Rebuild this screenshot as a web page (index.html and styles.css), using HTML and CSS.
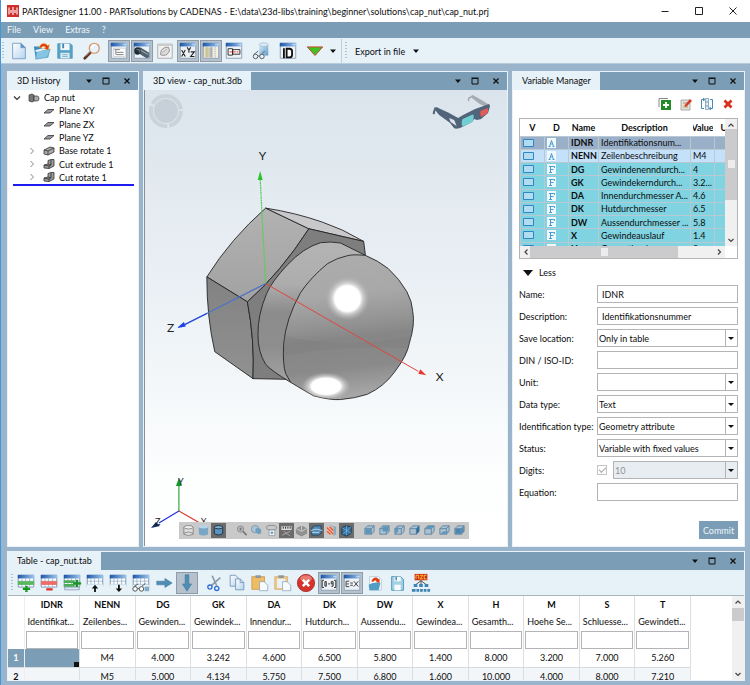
FILE: index.html
```html
<!DOCTYPE html>
<html lang="en">
<head>
<meta charset="utf-8">
<title>PARTdesigner 11.00</title>
<link rel="stylesheet" href="styles.css">
</head>
<body>
<svg class="defs" aria-hidden="true">
  <defs>
    <linearGradient id="g-blue" x1="0" y1="0" x2="1" y2="1"><stop offset="0" stop-color="#d6ebf8"/><stop offset="1" stop-color="#5f9cc9"/></linearGradient>
    <linearGradient id="g-cap" x1="0" y1="0" x2="1" y2="0"><stop offset="0" stop-color="#1d55a8"/><stop offset="1" stop-color="#9cc6ec"/></linearGradient>
    <linearGradient id="g-paper" x1="0" y1="0" x2="1" y2="1"><stop offset="0" stop-color="#fff"/><stop offset="1" stop-color="#b4d3ee"/></linearGradient>
  </defs>
  <symbol id="i-new" viewBox="0 0 22 22"><path d="M4 2.500h9l5 5v12H4z" fill="url(#g-paper)" stroke="#7a9cc4"/><path d="M13 2.500v5h5z" fill="#5b90c4" stroke="#5b90c4" stroke-width=".5"/></symbol>
  <symbol id="i-open" viewBox="0 0 22 22"><path d="M2 6h6l2 2h8v10H4z" fill="#3f8cb8"/><path d="M5 11l15-2-3 9-13 2z" fill="#86c6e4" stroke="#3f86b0" stroke-width=".6"/><path d="M4 11l13-3" stroke="#e8f5fb" stroke-width="2"/><path d="M8 7c1-4 6-6 9-2l2-1-1 6-5-2 2-1c-2-2-4-1-5 1z" fill="#dd3f14" stroke="#f7ad2a" stroke-width=".6"/></symbol>
  <symbol id="i-save" viewBox="0 0 22 22"><path d="M3 3h14l2 2v14H3z" fill="#58a4c8" stroke="#3f86aa" stroke-width=".7"/><path d="M6 3h10v7H6z" fill="#f2f8fb"/><path d="M8 3h2v5H8z" fill="#3c88ab"/><path d="M6 13h10v6H6z" fill="#ddecf3"/><path d="M8 15h6M8 17h6" stroke="#7fb0c8"/></symbol>
  <symbol id="i-find" viewBox="0 0 22 22"><path d="M3 19l7-7" stroke="#5c3424" stroke-width="3" stroke-linecap="round"/><path d="M4 17l5-5" stroke="#b57b5c"/><circle cx="13.500" cy="8" r="5.500" fill="#e9f3fb" stroke="#d98f5a" stroke-width="1.300"/><path d="M10.500 8a3 3 0 013-3" stroke="#fff" stroke-width="1.500" fill="none"/></symbol>
  <symbol id="i-win" viewBox="0 0 22 22"><path d="M2.500 2.500h17v16.500h-17z" fill="#edf2f6" stroke="#8b9daf"/><path d="M2 2h18v4H2z" fill="url(#g-cap)"/><path d="M16 4h1M18 4h1" stroke="#fff"/></symbol>
  <symbol id="i-tree" viewBox="0 0 22 22"><use href="#i-win"/><path d="M5 8h13v9H5z" fill="#fff" stroke="#bbb" stroke-width=".6"/><path d="M6 9.500h6M8 12.500h8M8 15h8M7.500 10v5" stroke="#777" fill="none"/></symbol>
  <symbol id="i-bolt" viewBox="0 0 22 22"><use href="#i-win"/><path d="M5 8l4-1 10 6v5l-3 1L8 14z" fill="#50616e"/><path d="M9 10l9 5" stroke="#a8b8c2"/><ellipse cx="6" cy="11" rx="3.500" ry="4" fill="#202b33"/><path d="M5 9.500h3v3" stroke="#7e8d97" fill="none"/></symbol>
  <symbol id="i-sketch" viewBox="0 0 22 22"><path d="M3 3.500h16v15.500H3z" fill="#f1f1f1" stroke="#aaa"/><path d="M3 3.500h16v2H3z" fill="#ccc"/><path d="M6 15l1-5 4-3h4l1 4-3 4-4 1z" fill="#ddd" stroke="#777" stroke-width=".8"/><path d="M8 13l5-4" stroke="#aaa"/></symbol>
  <symbol id="i-xyz" viewBox="0 0 22 22"><use href="#i-win"/><path d="M4 10l4 7M8 10l-4 7M10 7l2 3 2-3M12 10v3M14 12h4l-4 5h4" stroke="#222" stroke-width="1.200" fill="none"/></symbol>
  <symbol id="i-cols" viewBox="0 0 22 22"><use href="#i-win"/><path d="M4 7h5v11H4z" fill="#dccf9b"/><path d="M9 7h4v11H9z" fill="#b8bdc4"/><path d="M13 7h5v11h-5z" fill="#f3efd9"/><path d="M6.500 7v11M11.500 7v11M15.500 7v11" stroke="#929aa3" stroke-dasharray="1 1"/></symbol>
  <symbol id="i-part" viewBox="0 0 22 22"><use href="#i-win"/><path d="M4.500 8.500h5v7h-5zM9.500 9.500h8v5h-8z" fill="#fff" stroke="#222"/><path d="M6 12h10" stroke="#d22" stroke-dasharray="3 1"/></symbol>
  <symbol id="i-cylglass" viewBox="0 0 22 22"><path d="M9 4h10v12H9z" fill="url(#g-blue)"/><ellipse cx="14" cy="4" rx="5" ry="2" fill="#dcebf5" stroke="#7a9cb5" stroke-width=".5"/><circle cx="5" cy="17" r="2.500" fill="#e3f0f7" stroke="#555"/><circle cx="12" cy="17" r="2.500" fill="#e3f0f7" stroke="#555"/><path d="M7.500 16.500h2M3 15l5-4M12 14l3-3" stroke="#555" fill="none"/></symbol>
  <symbol id="i-id" viewBox="0 0 22 22"><use href="#i-win"/><path d="M6.500 8v11M9.500 8.500h3q3 0 3 3v3.500q0 3-3 3h-3z" stroke="#111" stroke-width="2" fill="#fff"/></symbol>
  <symbol id="i-tri" viewBox="0 0 22 22"><path d="M2.500 6.500h17l-8.500 9.500z" fill="#41c224" stroke="#d4352a"/></symbol>
  <symbol id="i-grid" viewBox="0 0 22 22"><path d="M2.500 2.500h17v13h-17z" fill="#fff" stroke="#7b95b1"/><path d="M2 2h18v4H2z" fill="url(#g-cap)"/><path d="M2 9h18M2 12.500h18M6.500 5v10M10.500 5v10M15 5v10" stroke="#8ca9c6" stroke-width=".8"/></symbol>
  <symbol id="i-addrow" viewBox="0 0 22 22"><use href="#i-grid"/><path d="M2 9h18v4H2z" fill="#58b85b"/><path d="M7.500 17.500h8M11.500 14v7" stroke="#199521" stroke-width="2.500"/></symbol>
  <symbol id="i-delrow" viewBox="0 0 22 22"><use href="#i-grid"/><path d="M2 9h18v4H2z" fill="#f06b68"/><path d="M8 18h7" stroke="#df3028" stroke-width="2.500"/></symbol>
  <symbol id="i-addcol" viewBox="0 0 22 22"><use href="#i-grid"/><path d="M2 8h12v3H2zM2 12h12v3H2z" fill="#4cae55"/><path d="M3 15.500h16v3H3z" fill="#dfe9f1" stroke="#7b95b1" stroke-width=".8"/><path d="M12 11.500h9M16.500 7.500v8" stroke="#199521" stroke-width="2.500"/></symbol>
  <symbol id="i-rowup" viewBox="0 0 22 22"><use href="#i-grid"/><path d="M2 12.500h18v4H2z" fill="#e6f1f8"/><path d="M11 21v-5" stroke="#111" stroke-width="2"/><path d="M7.500 17l3.500-4 3.500 4z" fill="#111"/></symbol>
  <symbol id="i-rowdn" viewBox="0 0 22 22"><use href="#i-grid"/><path d="M2 12.500h18v4H2z" fill="#e6f1f8"/><path d="M12 13v5" stroke="#111" stroke-width="2"/><path d="M8.500 17l3.500 4 3.500-4z" fill="#111"/></symbol>
  <symbol id="i-gridglass" viewBox="0 0 22 22"><use href="#i-grid"/><path d="M2 13h18v4H2z" fill="#e6f1f8"/><circle cx="4.500" cy="17.500" r="2.500" fill="#fff" stroke="#444"/><circle cx="11.500" cy="17.500" r="2.500" fill="#fff" stroke="#444"/><path d="M7 17h2M3 15l5-3M12 14.500l4-3" stroke="#555"/><path d="M15 15h5v5h-5z" fill="#86abc9"/></symbol>
  <symbol id="i-right" viewBox="0 0 22 22"><path d="M3 9h9V6l8 5-8 5v-3H3z" fill="#4f8db5" stroke="#3a749b" stroke-width=".6"/></symbol>
  <symbol id="i-down" viewBox="0 0 22 22"><path d="M9 2v10H6l5 8 5-8h-3V2z" fill="#4f8db5" stroke="#3a749b" stroke-width=".6"/></symbol>
  <symbol id="i-cut" viewBox="0 0 22 22"><path d="M9 3l5 11M18 5L8 14" stroke="#8a9aa6" stroke-width="1.800"/><circle cx="6.500" cy="15.500" r="2.300" fill="none" stroke="#2f6fd6" stroke-width="1.500"/><circle cx="14" cy="17" r="2.300" fill="none" stroke="#2f6fd6" stroke-width="1.500"/></symbol>
  <symbol id="i-copy" viewBox="0 0 22 22"><path d="M3.500 2.500h6l3 3v9h-9z" fill="url(#g-paper)" stroke="#7797b8"/><path d="M9.500 6.500h5l4 4v8h-9z" fill="url(#g-paper)" stroke="#7797b8"/><path d="M14.500 6.500v4h4" fill="none" stroke="#7797b8"/></symbol>
  <symbol id="i-paste" viewBox="0 0 22 22"><path d="M2 4h14v14H2z" fill="#eebc62" stroke="#c08a34" stroke-width=".7"/><path d="M6 2.500h6v3H6z" fill="#8d98a1"/><path d="M10.500 9.500h5l4 4v6h-9z" fill="#f6fafc" stroke="#8ba0b4" stroke-width=".8"/></symbol>
  <symbol id="i-paste2" viewBox="0 0 22 22"><path d="M2 4h14v14H2z" fill="#f0c98a" stroke="#c9a05a" stroke-width=".7"/><path d="M4.500 6.500h9v10h-9z" fill="#e9f2f8"/><path d="M6 2.500h6v3H6z" fill="#8d98a1"/><path d="M10.500 9.500h5l4 4v6h-9z" fill="#f6fafc" stroke="#8ba0b4" stroke-width=".8"/></symbol>
  <symbol id="i-stop" viewBox="0 0 22 22"><circle cx="11" cy="11" r="9.500" fill="#d5342c" stroke="#9d211d" stroke-width=".8"/><ellipse cx="11" cy="6" rx="6.500" ry="3.500" fill="#e97a70"/><path d="M7.500 7.500l7 7M14.500 7.500l-7 7" stroke="#fff" stroke-width="2.800"/></symbol>
  <symbol id="i-range" viewBox="0 0 22 22"><use href="#i-win"/><path d="M5.500 8h-2v8h2M16.500 8h2v8h-2M6.500 9.500h1.500v5H6.500zM10 12h2M15.500 12H13.500V9.500h2v5h-2" stroke="#222" fill="none"/></symbol>
  <symbol id="i-ex" viewBox="0 0 22 22"><use href="#i-win"/><path d="M8 9H4.500v6H8M5 12h2.500M9 11h3M9 13.500h3M13 9l5 6M18 9l-5 6" stroke="#222" fill="none" stroke-width=".9"/></symbol>
  <symbol id="i-reload" viewBox="0 0 22 22"><path d="M5 4h10l3 3v12H5z" fill="#f5fafc" stroke="#9ab6c9" stroke-width=".6"/><path d="M4 13q7-4 13-2l-2 8H5z" fill="#519dc4"/><path d="M7 9c2-5 6-5 8-2l1-1v5l-4-1 1-1c-1-1-3-1-4 1z" fill="#dd3f14"/></symbol>
  <symbol id="i-save2" viewBox="0 0 22 22"><path d="M4 4h10l3 3v12H4z" fill="#a4d0e4" stroke="#4d94b5"/><path d="M7 4h7v5H7zM7 13h7v6H7z" fill="#f5fafc"/><path d="M9 4v4" stroke="#397f9f" stroke-width="1.500"/></symbol>
  <symbol id="i-tree3" viewBox="0 0 22 22"><path d="M4 1h14v7H4z" fill="#cf2c16"/><path d="M5.500 6.500v-4h3v4M10 2.500h3l-3 4h3M17 2.500h-2.500v4H17" stroke="#ffd43b" fill="none"/><path d="M11 8v5M11 8.500l-6 4.500M11 8.500l6 4.500" stroke="#444"/><path d="M3 12h4v3.500H3zM9 12h4v3.500H9zM15 12h4v3.500h-4zM1 17.500h4v3H1zM6 17.500h3v3H6zM10 17.500h3v3h-3zM14 17.500h3v3h-3zM18 17.500h3v3h-3z" fill="#3d83b3"/></symbol>

  <symbol id="w-drop" viewBox="0 0 10 10"><path d="M2 3.500h6L5 7z" fill="#111"/></symbol>
  <symbol id="w-max" viewBox="0 0 10 10"><path d="M2 2.500h6v5.500H2z" fill="none" stroke="#111"/><path d="M1.500 2h7" stroke="#111"/></symbol>
  <symbol id="w-close" viewBox="0 0 10 10"><path d="M2.500 2.500l5 5M7.500 2.500l-5 5" stroke="#111" stroke-width="1.300"/></symbol>

  <symbol id="t-nut" viewBox="0 0 12 10"><path d="M1 2l3-1 2 1v6L4 9 1 8z" fill="#777" stroke="#333" stroke-width=".7"/><path d="M6 3h3q2 0 2 2.500T9 8H6z" fill="#aaa" stroke="#333" stroke-width=".7"/></symbol>
  <symbol id="t-plane" viewBox="0 0 12 10"><path d="M1 7l4-3.500h6L7 7z" fill="#999" stroke="#444" stroke-width=".9"/></symbol>
  <symbol id="t-base" viewBox="0 0 12 10"><path d="M1 4l6-3 4 1v4L5 9 1 8z" fill="#aaa" stroke="#333" stroke-width=".8"/><path d="M1 4l4 1 6-3M5 5v4" fill="none" stroke="#333" stroke-width=".8"/></symbol>
  <symbol id="t-cut" viewBox="0 0 12 10"><path d="M1 6l4-1V1.500L8 .5h3V7L6 9.500 1 9z" fill="#999" stroke="#333" stroke-width=".8"/><path d="M5 5l3 1V1M1 6l5 1 2-1M6 7v2.500" fill="none" stroke="#333" stroke-width=".8"/></symbol>
  <symbol id="c-right" viewBox="0 0 8 8"><path d="M2.500 1l3 3-3 3" fill="none" stroke="#888"/></symbol>
  <symbol id="c-down" viewBox="0 0 8 8"><path d="M1 2.500l3 3 3-3" fill="none" stroke="#333" stroke-width="1.200"/></symbol>
  <symbol id="c-up" viewBox="0 0 8 8"><path d="M1.500 5.500L4 3l2.500 2.500" fill="none" stroke="#444" stroke-width="1.200"/></symbol>
  <symbol id="c-dn" viewBox="0 0 8 8"><path d="M1.500 3L4 5.500 6.500 3" fill="none" stroke="#444" stroke-width="1.200"/></symbol>
  <symbol id="c-lt" viewBox="0 0 8 8"><path d="M5.500 1.500L3 4l2.500 2.500" fill="none" stroke="#444" stroke-width="1.200"/></symbol>
  <symbol id="c-rt" viewBox="0 0 8 8"><path d="M3 1.500L5.500 4 3 6.500" fill="none" stroke="#444" stroke-width="1.200"/></symbol>

  <symbol id="v-box" viewBox="0 0 11 10"><path d="M.5 1.500h10v7h-10z" fill="#b4dcf0" stroke="#2f86c4"/></symbol>
  <symbol id="v-a" viewBox="0 0 10 10"><path d="M0 0h9v10H0z" fill="#eef8fd"/><path d="M1.500 8.500h2M5.500 8.500h2M2.500 8.500l2-6 2 6M3.500 6h2" stroke="#3a93cc" fill="none" stroke-width=".9"/></symbol>
  <symbol id="v-f" viewBox="0 0 10 10"><path d="M0 0h9v10H0z" fill="#eef8fd"/><path d="M2 8.500h3M2 2.500h5.500v1.500M3.500 2.500v6M3.500 5.500h3" stroke="#3a93cc" fill="none" stroke-width=".9"/></symbol>

  <symbol id="m-wire" viewBox="0 0 14 14"><path d="M2 3.500v7.500q5 3 10 0V3.500z" fill="#ddd"/><ellipse cx="7" cy="3.500" rx="5" ry="1.800" fill="#eee" stroke="#777" stroke-width=".8"/><path d="M2 3.500v7.500q5 3 10 0V3.500M2 10q5-3 10 0" fill="none" stroke="#777" stroke-width=".8"/></symbol>
  <symbol id="m-cyl" viewBox="0 0 14 14"><path d="M2 3v8q5 3 10 0V3z" fill="#7aa6c6"/><ellipse cx="7" cy="3" rx="5" ry="1.800" fill="#b9d4e6"/></symbol>
  <symbol id="m-cyl2" viewBox="0 0 14 14"><path d="M2.500 3.500v7q4.500 3 9 0v-7z" fill="#5b93bd" stroke="#1d3446"/><ellipse cx="7" cy="3.500" rx="4.500" ry="1.700" fill="#83b1d0" stroke="#1d3446"/></symbol>
  <symbol id="m-zoom" viewBox="0 0 14 14"><circle cx="6" cy="5.500" r="3.300" fill="#bbb" stroke="#888"/><path d="M8.500 8l4 4" stroke="#777" stroke-width="1.800"/><path d="M4.500 5.500h3M6 4v3" stroke="#666" stroke-width=".8"/></symbol>
  <symbol id="m-orb" viewBox="0 0 14 14"><circle cx="5.500" cy="5.500" r="4" fill="#a9c4d6" stroke="#7b8e9c" stroke-width=".8"/><path d="M6 5l3-1 3 2v4l-3 1-3-2z" fill="#6f9dbd"/></symbol>
  <symbol id="m-rot" viewBox="0 0 14 14"><ellipse cx="7" cy="4" rx="5.500" ry="2.500" fill="none" stroke="#888"/><path d="M4.500 6.500h6v6h-6z" fill="#f4f8fa" stroke="#7c8b96" stroke-width=".7"/><path d="M7.500 8v3M6 9.500h3" stroke="#4482ab"/></symbol>
  <symbol id="m-rule" viewBox="0 0 14 14"><path d="M1.500 2.500h11v4h-11z" fill="#ddd"/><path d="M3.500 3v2M6 3v2M8.500 3v2M11 3v2" stroke="#222"/><path d="M2 12l9-4M4 8l7 5" stroke="#aaa"/></symbol>
  <symbol id="m-cube" viewBox="0 0 14 14"><path d="M1.500 5L7 2l5.500 3v5L7 13l-5.500-3z" fill="#909090" stroke="#777" stroke-width=".6"/><path d="M1.500 5L7 8l5.500-3M7 1v6" fill="none" stroke="#ddd" stroke-width=".8"/></symbol>
  <symbol id="m-sec" viewBox="0 0 14 14"><path d="M2 4l3-2h7v8l-3 2H2z" fill="#4f89b4" stroke="#1f3b50" stroke-width=".8"/><path d="M1 7q6-3 12 0M2 9h8" stroke="#b9dcf0" fill="none"/></symbol>
  <symbol id="m-hatch" viewBox="0 0 14 14"><path d="M4 1l8 2v8l-3 2V4z" fill="#83acc8"/><path d="M2 3h7v9L2 10z" fill="#f4b39b"/><path d="M2 4l7 7M2 8l4 3M5 3l4 4" stroke="#e0522a" stroke-width="1.200"/></symbol>
  <symbol id="m-net" viewBox="0 0 14 14"><path d="M2 4l4-2 6 1v7l-5 3-5-2z" fill="#36719f" stroke="#213b50"/><path d="M2 4l10 6M12 3L3 11M7 2v10" stroke="#80b7db" stroke-width=".7"/></symbol>
  <symbol id="m-v" viewBox="0 0 14 14"><path d="M2 5l3-3h7v6l-3 3H2z" fill="#a9c1d2" stroke="#58809c" stroke-width=".9"/><path d="M2 5h7v6M9 5l3-3" fill="none" stroke="#58809c" stroke-width=".9"/></symbol>
  <symbol id="m-front" viewBox="0 0 14 14"><use href="#m-v"/><path d="M2.500 5.500h6v5h-6z" fill="#5d94ba"/></symbol>
  <symbol id="m-back" viewBox="0 0 14 14"><use href="#m-v"/><path d="M5 2.500h6.500V8H5z" fill="#5d94ba"/></symbol>
  <symbol id="m-left" viewBox="0 0 14 14"><use href="#m-v"/><path d="M2.500 5.500l3-3V8l-3 3z" fill="#5d94ba"/></symbol>
  <symbol id="m-right" viewBox="0 0 14 14"><use href="#m-v"/><path d="M9 5l3-3v6l-3 3z" fill="#2e719f"/></symbol>
  <symbol id="m-top" viewBox="0 0 14 14"><use href="#m-v"/><path d="M2.500 4.500l3-2.500h6L9 4.500z" fill="#5d94ba"/></symbol>
  <symbol id="m-bot" viewBox="0 0 14 14"><use href="#m-v"/><path d="M2.500 10.500l3-2.500h6L9 10.500z" fill="#5d94ba"/></symbol>
  <symbol id="m-iso" viewBox="0 0 14 14"><use href="#m-v"/><path d="M2.500 5.500h6v5h-6zM9.500 5l2-2v5l-2 2z" fill="#4a86b0"/></symbol>
</svg>

<div class="window">
  <header class="titlebar">
    <svg class="app-icon" viewBox="0 0 12 12"><path d="M0 0h12v12H0z" fill="#cf2f2b"/><path d="M2 2.500v7M10 2.500v7M4 5v3M8 5v3M5.500 4.500h1M5.500 7.500h1M6 2v8" stroke="#fff" stroke-width="1.100"/></svg>
    <h1>PARTdesigner 11.00 - PARTsolutions by CADENAS - E:\data\23d-libs\training\beginner\solutions\cap_nut\cap_nut.prj</h1>
    <div class="win-buttons">
      <button aria-label="Minimize"><svg viewBox="0 0 10 10"><path d="M1.500 5.500h7" stroke="#222"/></svg></button>
      <button aria-label="Maximize"><svg viewBox="0 0 10 10"><path d="M1.500 1.500h7v7h-7z" fill="none" stroke="#222"/></svg></button>
      <button aria-label="Close"><svg viewBox="0 0 10 10"><path d="M1.500 1.500l7 7M8.500 1.500l-7 7" stroke="#222"/></svg></button>
    </div>
  </header>
  <nav class="menubar"><a href="#">File</a><a href="#">View</a><a href="#">Extras</a><a href="#">?</a></nav>
  <div class="toolbar main-tools">
    <i class="grip"></i>
    <button aria-label="New"><svg><use href="#i-new"/></svg></button>
    <button aria-label="Open"><svg><use href="#i-open"/></svg></button>
    <button aria-label="Save"><svg><use href="#i-save"/></svg></button>
    <i class="space"></i>
    <button aria-label="Find"><svg><use href="#i-find"/></svg></button>
    <i class="space"></i>
    <button class="on" aria-label="History"><svg><use href="#i-tree"/></svg></button>
    <button class="on" aria-label="3D view"><svg><use href="#i-bolt"/></svg></button>
    <button aria-label="Sketch"><svg><use href="#i-sketch"/></svg></button>
    <button class="on" aria-label="Variables"><svg><use href="#i-xyz"/></svg></button>
    <button class="on" aria-label="Table"><svg><use href="#i-cols"/></svg></button>
    <button aria-label="Part"><svg><use href="#i-part"/></svg></button>
    <i class="space"></i>
    <button aria-label="Preview"><svg><use href="#i-cylglass"/></svg></button>
    <i class="space"></i>
    <button aria-label="ID"><svg><use href="#i-id"/></svg></button>
    <i class="space"></i>
    <button aria-label="Check"><svg><use href="#i-tri"/></svg></button>
    <button class="mini" aria-label="More"><svg><use href="#w-drop"/></svg></button>
    <i class="rule"></i><i class="grip"></i>
    <button class="export">Export in file <svg><use href="#w-drop"/></svg></button>
  </div>

  <main class="workspace">
    <section class="panel history">
      <header class="dock"><h2>3D History</h2><button aria-label="Menu"><svg><use href="#w-drop"/></svg></button><button aria-label="Float"><svg><use href="#w-max"/></svg></button><button aria-label="Close"><svg><use href="#w-close"/></svg></button></header>
      <div class="panel-body">
        <ul class="tree">
          <li class="root"><svg class="chev"><use href="#c-down"/></svg><svg class="node"><use href="#t-nut"/></svg>Cap nut</li>
          <li><i class="chev"></i><svg class="node"><use href="#t-plane"/></svg>Plane XY</li>
          <li><i class="chev"></i><svg class="node"><use href="#t-plane"/></svg>Plane ZX</li>
          <li><i class="chev"></i><svg class="node"><use href="#t-plane"/></svg>Plane YZ</li>
          <li><svg class="chev"><use href="#c-right"/></svg><svg class="node"><use href="#t-base"/></svg>Base rotate 1</li>
          <li><svg class="chev"><use href="#c-right"/></svg><svg class="node"><use href="#t-cut"/></svg>Cut extrude 1</li>
          <li><svg class="chev"><use href="#c-right"/></svg><svg class="node"><use href="#t-cut"/></svg>Cut rotate 1</li>
        </ul>
      </div>
    </section>

    <section class="panel view">
      <header class="dock"><h2>3D view - cap_nut.3db</h2><button aria-label="Menu"><svg><use href="#w-drop"/></svg></button><button aria-label="Float"><svg><use href="#w-max"/></svg></button><button aria-label="Close"><svg><use href="#w-close"/></svg></button></header>
      <div class="canvas">
        <svg class="scene" viewBox="144 90 363 457" role="img" aria-label="Cap nut">
          <defs>
            <linearGradient id="s-a" x1="0" y1="0" x2="0" y2="1"><stop offset="0" stop-color="#b2b2b2"/><stop offset="1" stop-color="#a2a2a2"/></linearGradient>
            <linearGradient id="s-f" x1="0" y1="0" x2="0" y2="1"><stop offset="0" stop-color="#828282"/><stop offset="1" stop-color="#919191"/></linearGradient>
            <linearGradient id="s-c" x1="0" y1="0" x2="0" y2="1"><stop offset="0" stop-color="#b4b4b4"/><stop offset=".3" stop-color="#adadad"/><stop offset=".5" stop-color="#8c8c8c"/><stop offset=".75" stop-color="#8e8e8e"/><stop offset="1" stop-color="#a3a3a3"/></linearGradient>
            <linearGradient id="s-d" x1=".2" y1="0" x2=".3" y2="1"><stop offset="0" stop-color="#adadad"/><stop offset=".3" stop-color="#a8a8a8"/><stop offset=".5" stop-color="#939393"/><stop offset=".6" stop-color="#868686"/><stop offset=".8" stop-color="#8a8a8a"/><stop offset="1" stop-color="#a8a8a8"/></linearGradient>
            <radialGradient id="s-h"><stop offset="0" stop-color="#fff"/><stop offset=".58" stop-color="#fff"/><stop offset=".7" stop-color="#dcdcdc" stop-opacity=".8"/><stop offset="1" stop-color="#b5b5b5" stop-opacity="0"/></radialGradient>
            <clipPath id="dome"><path d="M365 255.700Q353 254.500 347 256Q337 258 327 264Q310 278 300 293Q285 320 283 345Q282 365 285 374L290 383Q305 392 313 396.500Q330 401 340 400.300Q355 399 367 395Q384 387 394 373Q407 356 409 344Q415 325 412.500 312Q412 302 406.500 292Q399 279 388 269Q378 261 365 255.700z"/></clipPath>
          </defs>
          <g fill="#c7d0d8"><circle cx="165" cy="111" r="12"/></g>
          <circle cx="165" cy="111" r="15" fill="none" stroke="#cbd3da" stroke-width="4" stroke-dasharray="20 2 30 2 38 2"/>
          <g>
            <path d="M471 97.500q-3-1-2.500 3.500" stroke="#a3a9b0" fill="none" stroke-width="1.500"/>
            <path d="M470 96.500l2.500-1.500 9 5 8 5-3 2-7-3z" fill="#a6abb2"/>
            <path d="M438 109q-4-2-4.500 5" stroke="#52647a" fill="none" stroke-width="2"/>
            <path d="M434 107.500h3l11 5 10 5.500 5-3 12-6 14-5 1 2-2 7-7 6-4 1-3-1-2 3-12 6q-6 2-7-1l-3-4-11-8-5-6z" fill="#52647a"/>
            <path d="M449 118l5 2 2.500 6-6-4z" fill="#dfe7ed"/>
            <path d="M462.500 119l10-4.500q1.500 0 1 3.500-.5 4-3 5l-8 3.500q-2-3 0-7.500z" fill="#70cfd3"/>
            <path d="M480.500 111l7-3q1.500 3-.5 5.500l-6 3.500q-1.500-2-.5-6z" fill="#e45c58"/>
          </g>
          <g stroke="#252525" stroke-width=".9" stroke-linejoin="round">
            <path d="M265 208.300Q230 239 206 277.300L246.700 302.300Q280 273 308.300 229z" fill="url(#s-a)"/>
            <path d="M265 208.300L308.300 229L363.300 241.700Q342 229 321.700 222.300Q295 213 265 208.300z" fill="#c8c8cb"/>
            <path d="M206 277.300Q206 318 214 352.300L252.300 379.300Q254 340 246.700 302.300z" fill="url(#s-f)"/>
            <path d="M308.300 229Q280 273 246.700 302.300Q254 340 252.300 379.300L286.700 380L365 255.700L363.300 241.700z" fill="#7e7e7e"/>
            <path d="M365 255.700L340 243.300Q330 241.500 320 243Q303 248 287 265Q271 282 266 294Q257 315 257.300 335Q257 352 265 365Q270 371 290 383Q320 320 365 255.700z" fill="url(#s-c)"/>
            <path d="M365 255.700Q353 254.500 347 256Q337 258 327 264Q310 278 300 293Q285 320 283 345Q282 365 285 374L290 383Q305 392 313 396.500Q330 401 340 400.300Q355 399 367 395Q384 387 394 373Q407 356 409 344Q415 325 412.500 312Q412 302 406.500 292Q399 279 388 269Q378 261 365 255.700z" fill="url(#s-d)"/>
          </g>
          <g clip-path="url(#dome)">
            <path d="M283 336q60 15 130 0v13q-60-5-130 7z" fill="#7c7c7c" opacity=".3"/>
            <ellipse cx="347" cy="299" rx="22" ry="22" fill="url(#s-h)"/>
            <ellipse cx="325.500" cy="387" rx="25" ry="14" fill="url(#s-h)"/>
          </g>
          <path d="M265 284L259.500 179" stroke="#57cf57" stroke-width="1.200" stroke-dasharray="2 .5"/><path d="M259.500 171l-2.500 9h5z" fill="#2bc12b"/>
          <path d="M265 284L184 325" stroke="#4f74c4" stroke-width="1.200"/><path d="M206 314L184 325" stroke="#2449e8" stroke-width="1.300"/><path d="M176 328.500l7-6 2 4.500z" fill="#1b3fe6"/>
          <path d="M265 284L418 372" stroke="#e0453e" stroke-width="1"/><path d="M426 376l-8-1.500 2-4.500z" fill="#e23a30"/>
          <g class="axis-label"><text x="258" y="160">Y</text><text x="166" y="333">Z</text><text x="435.500" y="382">X</text></g>
          <path d="M178 512V486" stroke="#31a83b" stroke-width="1.200"/><path d="M178 479l-3 8h6z" fill="#169826"/>
          <path d="M178 512l-20 12" stroke="#1f2ee0" stroke-width="1.200"/><path d="M150 529l5-6 4 4z" fill="#10295f"/>
          <path d="M178 512l21 12" stroke="#d83931" stroke-width="1.200"/><path d="M206 528l-8-1 2-4z" fill="#8b3d3d"/>
          <g class="triad-label"><text x="177" y="486">Y</text><text x="154" y="526">Z</text><text x="200" y="526">X</text></g>
        </svg>
        <div class="view-tools">
          <button aria-label="Wireframe"><svg><use href="#m-wire"/></svg></button><button aria-label="Shaded"><svg><use href="#m-cyl"/></svg></button><button class="on" aria-label="Shaded with edges"><svg><use href="#m-cyl2"/></svg></button>
          <i class="space"></i>
          <button aria-label="Zoom"><svg><use href="#m-zoom"/></svg></button><button aria-label="Zoom all"><svg><use href="#m-orb"/></svg></button><button aria-label="Rotate"><svg><use href="#m-rot"/></svg></button><button class="on" aria-label="Measure"><svg><use href="#m-rule"/></svg></button><button aria-label="Cube"><svg><use href="#m-cube"/></svg></button><button class="on" aria-label="Section"><svg><use href="#m-sec"/></svg></button><button aria-label="Hatching"><svg><use href="#m-hatch"/></svg></button><button class="on" aria-label="Mesh"><svg><use href="#m-net"/></svg></button>
          <i class="space"></i>
          <button aria-label="Front"><svg><use href="#m-front"/></svg></button><button aria-label="Back"><svg><use href="#m-back"/></svg></button><button aria-label="Left"><svg><use href="#m-left"/></svg></button><button aria-label="Right"><svg><use href="#m-right"/></svg></button><button aria-label="Top"><svg><use href="#m-top"/></svg></button><button aria-label="Bottom"><svg><use href="#m-bot"/></svg></button><button aria-label="Isometric"><svg><use href="#m-iso"/></svg></button>
        </div>
      </div>
    </section>

    <section class="panel vars">
      <header class="dock"><h2>Variable Manager</h2><button aria-label="Menu"><svg><use href="#w-drop"/></svg></button><button aria-label="Float"><svg><use href="#w-max"/></svg></button><button aria-label="Close"><svg><use href="#w-close"/></svg></button></header>
      <div class="panel-body">
        <div class="var-actions">
          <button aria-label="Add"><svg viewBox="0 0 14 14"><path d="M1 10V1.500h9" fill="none" stroke="#888"/><path d="M3 3h10v10H3z" fill="#238a2a"/><path d="M8 5v6M5 8h6" stroke="#fff" stroke-width="2"/></svg></button>
          <button aria-label="Edit"><svg viewBox="0 0 14 14"><path d="M2 3h9v10H2z" fill="#e5e0d6" stroke="#999" stroke-width=".8"/><path d="M4 6h5M4 10h5" stroke="#999"/><path d="M5 9l6-7 2 2-6 6z" fill="#d43b22"/><path d="M5 9l-1 2 3-1z" fill="#f2c14e"/></svg></button>
          <button aria-label="Rename"><svg viewBox="0 0 14 14"><path d="M4 2.500H1.500v9H4M10 2.500h2.500v9H10M3 1l2 1.500L3 4M11 10l-2 1.500 2 1.500" fill="none" stroke="#4a89b8"/><path d="M5.500 1.500h3v11h-3z" fill="#dceaf3" stroke="#7b9db5" stroke-width=".8"/><path d="M5.500 5h3M5.500 9h3" stroke="#7b9db5"/></svg></button>
          <button aria-label="Delete"><svg viewBox="0 0 14 14"><path d="M3.500 3.500l7 7M10.500 3.500l-7 7" stroke="#d8301d" stroke-width="2.800"/></svg></button>
        </div>
        <div class="grid-box">
          <div class="grid-clip">
            <table class="var-table">
              <colgroup><col class="c-v"><col class="c-d"><col class="c-n"><col class="c-t"><col class="c-w"><col class="c-u"></colgroup>
              <thead><tr><th>V</th><th>D</th><th>Name</th><th>Description</th><th><span class="clip">Value</span></th><th><span class="edge">Unit</span></th></tr></thead>
              <tbody>
                <tr class="current"><td><svg class="box"><use href="#v-box"/></svg></td><td><svg><use href="#v-a"/></svg></td><th>IDNR</th><td>Identifikationsnum...</td><td></td><td></td></tr>
                <tr class="light"><td><svg class="box"><use href="#v-box"/></svg></td><td><svg><use href="#v-a"/></svg></td><th>NENN</th><td>Zeilenbeschreibung</td><td>M4</td><td></td></tr>
                <tr><td><svg class="box"><use href="#v-box"/></svg></td><td><svg><use href="#v-f"/></svg></td><th>DG</th><td>Gewindenenndurch...</td><td>4</td><td></td></tr>
                <tr><td><svg class="box"><use href="#v-box"/></svg></td><td><svg><use href="#v-f"/></svg></td><th>GK</th><td>Gewindekerndurch...</td><td>3.2...</td><td></td></tr>
                <tr><td><svg class="box"><use href="#v-box"/></svg></td><td><svg><use href="#v-f"/></svg></td><th>DA</th><td>Innendurchmesser A...</td><td>4.6</td><td></td></tr>
                <tr><td><svg class="box"><use href="#v-box"/></svg></td><td><svg><use href="#v-f"/></svg></td><th>DK</th><td>Hutdurchmesser</td><td>6.5</td><td></td></tr>
                <tr><td><svg class="box"><use href="#v-box"/></svg></td><td><svg><use href="#v-f"/></svg></td><th>DW</th><td>Aussendurchmesser ...</td><td>5.8</td><td></td></tr>
                <tr><td><svg class="box"><use href="#v-box"/></svg></td><td><svg><use href="#v-f"/></svg></td><th>X</th><td>Gewindeauslauf</td><td>1.4</td><td></td></tr>
                <tr><td><svg class="box"><use href="#v-box"/></svg></td><td><svg><use href="#v-f"/></svg></td><th>H</th><td>Gesamthoehe</td><td>8</td><td></td></tr>
              </tbody>
            </table>
          </div>
          <div class="vbar"><svg><use href="#c-up"/></svg><div class="track"><i class="thumb"></i></div><svg><use href="#c-dn"/></svg></div>
          <div class="hbar"><svg><use href="#c-lt"/></svg><div class="track"><i class="thumb"></i></div><svg><use href="#c-rt"/></svg></div>
        </div>
        <button class="less"><svg viewBox="0 0 10 6"><path d="M0 0h10L5 6z" fill="#111"/></svg>Less</button>
        <form class="form">
          <label for="f-name">Name:</label><input id="f-name" value="IDNR">
          <label for="f-desc">Description:</label><input id="f-desc" value="Identifikationsnummer">
          <label for="f-save">Save location:</label><span class="select"><select id="f-save"><option>Only in table</option></select></span>
          <label for="f-din">DIN / ISO-ID:</label><input id="f-din">
          <label for="f-unit">Unit:</label><span class="select"><select id="f-unit"><option></option></select></span>
          <label for="f-type">Data type:</label><span class="select"><select id="f-type"><option>Text</option></select></span>
          <label for="f-ident">Identification type:</label><span class="select"><select id="f-ident"><option>Geometry attribute</option></select></span>
          <label for="f-status">Status:</label><span class="select"><select id="f-status"><option>Variable with fixed values</option></select></span>
          <label for="f-digits">Digits:</label><span class="digits"><input type="checkbox" checked disabled aria-label="Limit digits"><span class="select"><select id="f-digits" disabled><option>10</option></select></span></span>
          <label for="f-eq">Equation:</label><input id="f-eq">
        </form>
        <button class="commit">Commit</button>
      </div>
    </section>
  </main>

  <section class="panel table-panel">
    <header class="dock"><h2>Table - cap_nut.tab</h2><button aria-label="Menu"><svg><use href="#w-drop"/></svg></button><button aria-label="Float"><svg><use href="#w-max"/></svg></button><button aria-label="Close"><svg><use href="#w-close"/></svg></button></header>
    <div class="toolbar table-tools">
      <i class="grip"></i>
      <button aria-label="Add row"><svg><use href="#i-addrow"/></svg></button>
      <button aria-label="Delete row"><svg><use href="#i-delrow"/></svg></button>
      <button aria-label="Insert row"><svg><use href="#i-addcol"/></svg></button>
      <button aria-label="Row up"><svg><use href="#i-rowup"/></svg></button>
      <button aria-label="Row down"><svg><use href="#i-rowdn"/></svg></button>
      <button aria-label="Preview row"><svg><use href="#i-gridglass"/></svg></button>
      <button aria-label="Fill right"><svg><use href="#i-right"/></svg></button>
      <button class="on" aria-label="Fill down"><svg><use href="#i-down"/></svg></button>
      <i class="space"></i>
      <button aria-label="Cut"><svg><use href="#i-cut"/></svg></button>
      <button aria-label="Copy"><svg><use href="#i-copy"/></svg></button>
      <button aria-label="Paste"><svg><use href="#i-paste"/></svg></button>
      <button aria-label="Paste special"><svg><use href="#i-paste2"/></svg></button>
      <button aria-label="Delete"><svg><use href="#i-stop"/></svg></button>
      <button class="on" aria-label="Range"><svg><use href="#i-range"/></svg></button>
      <button class="on" aria-label="Formula"><svg><use href="#i-ex"/></svg></button>
      <button aria-label="Import"><svg><use href="#i-reload"/></svg></button>
      <button aria-label="Save table"><svg><use href="#i-save2"/></svg></button>
      <button aria-label="Structure"><svg><use href="#i-tree3"/></svg></button>
    </div>
    <div class="data">
      <div class="data-clip">
        <table class="data-table">
          <colgroup><col class="c-row"><col span="12"></colgroup>
          <thead>
            <tr class="names"><td></td><th>IDNR</th><th>NENN</th><th>DG</th><th>GK</th><th>DA</th><th>DK</th><th>DW</th><th>X</th><th>H</th><th>M</th><th>S</th><th>T</th></tr>
            <tr class="descs"><td></td><td>Identifikat...</td><td>Zeilenbes...</td><td>Gewinden...</td><td>Gewindek...</td><td>Innendur...</td><td>Hutdurch...</td><td>Aussendu...</td><td>Gewindea...</td><td>Gesamth...</td><td>Hoehe Se...</td><td>Schluesse...</td><td>Gewindeti...</td></tr>
            <tr class="filters"><td></td><td><input aria-label="Filter IDNR"></td><td><input aria-label="Filter NENN"></td><td><input aria-label="Filter DG"></td><td><input aria-label="Filter GK"></td><td><input aria-label="Filter DA"></td><td><input aria-label="Filter DK"></td><td><input aria-label="Filter DW"></td><td><input aria-label="Filter X"></td><td><input aria-label="Filter H"></td><td><input aria-label="Filter M"></td><td><input aria-label="Filter S"></td><td><input aria-label="Filter T"></td></tr>
          </thead>
          <tbody>
            <tr><th class="active">1</th><td class="active"><i class="handle"></i></td><td>M4</td><td>4.000</td><td>3.242</td><td>4.600</td><td>6.500</td><td>5.800</td><td>1.400</td><td>8.000</td><td>3.200</td><td>7.000</td><td>5.260</td></tr>
            <tr class="alt"><th>2</th><td></td><td>M5</td><td>5.000</td><td>4.134</td><td>5.750</td><td>7.500</td><td>6.800</td><td>1.600</td><td>10.000</td><td>4.000</td><td>8.000</td><td>7.210</td></tr>
          </tbody>
        </table>
      </div>
      <div class="vbar"><svg><use href="#c-up"/></svg><div class="track"><i class="thumb"></i></div><svg><use href="#c-dn"/></svg></div>
    </div>
  </section>
</div>
</body>
</html>
```
FILE: styles.css
```css
:root {
  --text: Lato, "Open Sans", sans-serif;
  --bar: #7b9db5;
  --back: #9ab4cb;
  --light: #e6f1f8;
  --line: #b4b4b6;
}
* { box-sizing: border-box; }
body { margin: 0; background: var(--back); color: #0c0c0e; font: 9px/13px var(--text); }
button, input, select { font: inherit; color: inherit; margin: 0; }
button { border: 0; padding: 0; background: none; display: grid; place-items: center; }
h1, h2 { margin: 0; font: inherit; }
svg { display: block; }
.defs { position: absolute; width: 0; height: 0; }

.window { display: flex; flex-direction: column; height: 100vh; min-height: 640px; border-left: 1px solid #3f97dd; overflow: hidden; }

.titlebar { display: flex; align-items: center; height: 22px; padding-left: 6px; background: #fff; }
.app-icon { width: 12px; height: 12px; }
.titlebar h1 { flex: 1; margin-left: 3px; white-space: nowrap; }
.win-buttons { display: flex; }
.win-buttons button { width: 34px; height: 22px; }
.win-buttons svg { width: 10px; height: 10px; }

.menubar { display: flex; gap: 12px; height: 16px; padding: 0 6px; background: var(--bar); line-height: 16px; }
.menubar a { color: #eef5f9; text-decoration: none; }

.toolbar { display: flex; align-items: center; gap: 1px; background: var(--light); }
.toolbar button { width: 22px; height: 22px; }
.toolbar svg { width: 20px; height: 20px; }
.toolbar .on { background: #b5c1cc; border: 1px solid #8f9ba6; }
.toolbar .space { width: 3px; }
.toolbar .grip { width: 2px; height: 18px; margin-right: 3px; background: repeating-linear-gradient(#b4bfc8 0 1px, transparent 1px 3px); }
.main-tools { height: 26px; padding: 1px 0 0 1px; border-bottom: 1px solid #b9cbd9; }
.toolbar .mini { width: 12px; }
.toolbar .mini svg, .toolbar .export svg { width: 10px; height: 10px; }
.toolbar .rule { width: 1px; height: 24px; margin: 0 2px 0 1px; background: #c1ced8; }
.toolbar .export { display: flex; align-items: center; gap: 6px; width: auto; padding: 0 4px; }

.workspace { display: grid; grid-template-columns: 132px 1fr 233px; gap: 4px; flex: 1; min-height: 0; padding: 7px 5px 0 6px; }
.panel { display: flex; flex-direction: column; min-width: 0; min-height: 0; border: 1px solid #e9f2f8; }
.dock { display: flex; align-items: center; height: 18px; padding-right: 6px; background: var(--bar); }
.dock h2 { align-self: stretch; padding: 0 9px; margin-right: auto; background: var(--light); line-height: 18px; white-space: nowrap; }
.dock button { width: 10px; height: 10px; margin-right: 7px; }
.dock button:last-child { margin: 0 0 0 4px; }
.dock svg { width: 10px; height: 10px; }
.panel-body { display: flex; flex-direction: column; flex: 1; min-height: 0; background: #fff; }

.tree { display: grid; grid-auto-rows: 1fr; height: 95px; margin: 1px 4px 0 5px; padding: 0; list-style: none; border-bottom: 2px solid #1c1cf0; }
.tree li { display: flex; align-items: center; gap: 4px; padding-left: 15px; }
.tree .root { padding-left: 0; }
.tree .chev { width: 8px; height: 8px; }
.tree .node { width: 12px; height: 10px; margin-left: 3px; }

.canvas { position: relative; flex: 1; min-height: 0; border-left: 1px solid #8b8f93; background: linear-gradient(#dbe4ec, #e9eff4 40%, #fdfefe 85%, #fff); }
.scene { width: 100%; height: 100%; }
.axis-label text { font-size: 12px; fill: #222; }
.triad-label text { font-size: 9px; fill: #222; }
.view-tools { position: absolute; left: 34px; bottom: 7px; display: flex; padding: 1px 2px; background: #c9c9c9; }
.view-tools button { width: 15px; height: 15px; }
.view-tools svg { width: 13px; height: 13px; }
.view-tools .on { background: #6b6b6b; }
.view-tools .space { width: 8px; }

.vars .panel-body { padding: 0 6px; }
.var-actions { display: flex; justify-content: flex-end; gap: 7px; padding: 7px 3px 7px 0; }
.var-actions button, .var-actions svg { width: 14px; height: 14px; }
.grid-box { display: grid; grid-template: 1fr 12px / 1fr 12px; height: 141px; border: 1px solid var(--line); }
.grid-clip { overflow: hidden; }
.var-table { width: 236px; height: 137px; table-layout: fixed; border-collapse: collapse; }
.c-v, .c-d { width: 24px; }
.c-n { width: 30px; }
.c-t { width: 92px; }
.c-w { width: 24px; }
.var-table th, .var-table td { height: 13px; padding: 0 2px; border: 1px solid #b9c9d3; line-height: 11px; text-align: left; white-space: nowrap; overflow: hidden; }
.var-table thead th { height: 17px; padding: 0; border: 0; text-align: center; background: #fff; }
.var-table .clip { display: flex; justify-content: center; width: 20px; margin: 0 auto; overflow: hidden; }
.var-table .edge { display: block; padding-left: 6px; text-align: left; }
.var-table tbody tr { background: #80d3e0; }
.var-table .current { background: #9ab0c9; }
.var-table .light { background: #c5e1fa; }
.var-table svg { width: 10px; height: 10px; }
.var-table .box { width: 11px; }

.vbar, .hbar { display: flex; background: #f0f0f1; }
.vbar { flex-direction: column; align-items: center; padding: 2px 0; }
.hbar { align-items: center; padding: 0 2px; }
.vbar svg, .hbar svg { width: 8px; height: 8px; flex: none; }
.track { flex: 1; align-self: stretch; }
.thumb { display: block; background: #cbcacc; }
.vars .vbar .thumb { height: 66%; background: linear-gradient(#ececec, #ececec) center / 7px 8px no-repeat #cbcacc; }
.vars .hbar .thumb { width: 80%; height: 12px; background: linear-gradient(#ececec, #ececec) center / 7px 8px no-repeat #cbcacc; }

.less { display: flex; align-items: center; gap: 6px; margin: 7px 4px 6px; }
.less svg { width: 10px; height: 6px; }
.form { display: grid; grid-template-columns: 74px 1fr; grid-auto-rows: 18px; gap: 4px; align-items: center; }
.form label { white-space: nowrap; }
.form input, .form select { width: 100%; height: 18px; padding: 0 4px; border: 1px solid var(--line); border-radius: 0; background: #fff; outline: 0; }
.form select { padding: 0 1px; appearance: none; }
.select { position: relative; display: block; flex: 1; }
.select::before { content: ""; position: absolute; top: 1px; bottom: 1px; right: 12px; width: 1px; background: var(--line); pointer-events: none; }
.select::after { content: ""; position: absolute; top: 8px; right: 4px; border: 3px solid transparent; border-top-color: #111; border-bottom: 0; pointer-events: none; }
.form select:disabled { background: #e8edf1; color: #8d9399; opacity: 1; }
.digits { display: flex; align-items: center; gap: 6px; }
.form .digits input { appearance: none; width: 10px; height: 10px; padding: 0; border-color: #c4c4c4; }
.digits input:checked::before { content: ""; display: block; width: 6px; height: 3px; margin: 1px; border: solid #a8a8a8; border-width: 0 0 1px 1px; transform: rotate(-45deg); }
.commit { align-self: flex-end; width: 39px; height: 18px; margin: auto 0 7px; background: var(--bar); color: #eef5f9; }

.table-panel { height: 130px; margin: 4px 5px 4px 6px; }
.table-tools { height: 26px; padding-left: 3px; border-bottom: 1px solid #a9b5be; }
.table-tools .grip { margin-right: 1px; }
.data { display: flex; flex: 1; min-height: 0; background: #fff; }
.data-clip { flex: 1; overflow: hidden; }
.data-table { width: calc(100% - 41px); table-layout: fixed; border-collapse: collapse; text-align: center; white-space: nowrap; }
.c-row { width: 16px; }
.data-table th, .data-table td { height: 18px; padding: 0; border-right: 1px solid #dcdfe2; overflow: hidden; }
.data-table .names > *, .data-table .descs > * { height: 17px; }
.data-table .descs td { text-align: left; padding-left: 3px; }
.data-table tr > :first-child { border-color: #eee; }
.data-table .filters td { height: 19px; padding: 0 1px; }
.filters input { display: block; width: 100%; height: 18px; border: 1px solid var(--line); background: #fff; padding: 0 2px; }
.data-table tbody tr { border-bottom: 1px solid #d5dade; }
.data-table .alt { background: #f3f6f8; }
.data-table .active { background: var(--bar); color: #fff; vertical-align: bottom; }
.data-table th.active { vertical-align: middle; }
.handle { display: block; width: 5px; height: 5px; margin-left: auto; background: #111; }
.data .vbar { width: 12px; }
.data .vbar .thumb { width: 12px; height: 13px; margin-top: 2px; }
.data .track { width: 12px; align-self: center; }
```
